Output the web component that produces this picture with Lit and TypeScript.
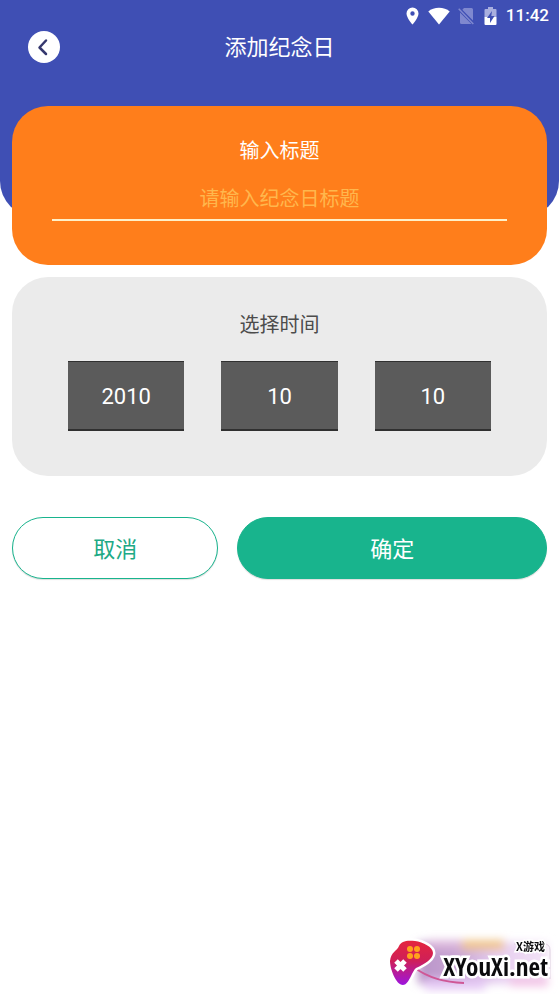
import { LitElement, html, css } from "lit";
import { customElement, state } from "lit/decorators.js";

@customElement("status-bar")
class StatusBar extends LitElement {
  static styles = css`
    :host {
      display: flex;
      align-items: center;
      justify-content: flex-end;
      height: 31px;
      padding-right: 10px;
      color: #fff;
      font: 500 17px/31px Roboto, sans-serif;
    }
    .pin { margin-right: 9px; }
    .wifi { margin-right: 8px; }
    .sim { margin-right: 10px; }
    .battery { margin-right: 9px; }
  `;

  render() {
    return html`
      <svg class="pin" width="13" height="18" viewBox="0 0 13 18" aria-hidden="true">
        <path fill="#fff" fill-rule="evenodd" d="M6.5 0.5A6 6 0 0 0 .5 6.5C.5 11 6.5 17.5 6.5 17.5S12.5 11 12.5 6.5A6 6 0 0 0 6.5.5ZM6.5 4.3a2.2 2.2 0 1 1 0 4.4a2.2 2.2 0 0 1 0-4.4Z" />
      </svg>
      <svg class="wifi" width="22" height="18" viewBox="0 0 22 18" aria-hidden="true">
        <path fill="#fff" d="M11 17.5L.3 4.4C3 2 7 .7 11 .7S19 2 21.7 4.4Z" />
      </svg>
      <svg class="sim" width="16" height="18" viewBox="0 0 16 18" aria-hidden="true">
        <path fill="#7f88cf" d="M6 1h7.5a1.5 1.5 0 0 1 1.5 1.5v11L4.3 2.7ZM2 5.5L13.5 17H3.5A1.5 1.5 0 0 1 2 15.5Z" />
        <path stroke="#7f88cf" stroke-width="1.5" d="M.7 1.7L15.3 17" />
      </svg>
      <svg class="battery" width="13" height="18" viewBox="0 0 13 18" aria-hidden="true">
        <path fill="#a9afdf" d="M4 0h5v2h2.5a1 1 0 0 1 1 1v7H.5V3a1 1 0 0 1 1-1H4Z" />
        <path fill="#fff" d="M.5 10h12v7a1 1 0 0 1-1 1h-10a1 1 0 0 1-1-1Z" />
        <path fill="#3f4fb4" d="M8 4L3 11h3v5l4.5-7H7.3Z" />
      </svg>
      <span>11:42</span>
    `;
  }
}

@customElement("site-badge")
class SiteBadge extends LitElement {
  static styles = css`
    :host {
      position: fixed;
      right: 0;
      bottom: 0;
      width: 179px;
      height: 69px;
      overflow: hidden;
      pointer-events: none;
    }
    .art { position: absolute; inset: 0; }
    .name, .tag {
      position: absolute;
      color: #0b0b0d;
      font-weight: 700;
      white-space: nowrap;
      paint-order: stroke fill;
    }
    .name {
      right: 11px;
      bottom: 15px;
      font-family: "Open Sans Condensed", "Noto Sans CJK SC", sans-serif;
      font-size: 25px;
      line-height: 26px;
      -webkit-text-stroke: 5px #fff;
    }
    .tag {
      right: 14px;
      top: 13px;
      font-family: "Noto Sans CJK SC", sans-serif;
      font-size: 11px;
      line-height: 16px;
      -webkit-text-stroke: 3px #fff;
    }
  `;

  render() {
    return html`
      <svg class="art" width="179" height="69" viewBox="0 0 179 69" aria-hidden="true">
        <defs>
          <linearGradient id="pad" x1="0" y1="0" x2="0" y2="1">
            <stop offset="0" stop-color="#e4263e" />
            <stop offset=".45" stop-color="#cf1f58" />
            <stop offset="1" stop-color="#9d16df" />
          </linearGradient>
          <linearGradient id="cloud" x1="0" y1="0" x2="1" y2="0">
            <stop offset="0" stop-color="#b994c9" />
            <stop offset=".3" stop-color="#c7a4d2" />
            <stop offset=".6" stop-color="#e5cdf0" />
            <stop offset="1" stop-color="#f4e4f6" />
          </linearGradient>
          <filter id="soft" x="-20%" y="-40%" width="140%" height="180%">
            <feGaussianBlur stdDeviation="4" />
          </filter>
        </defs>
        <g filter="url(#soft)">
          <rect x="38" y="17" width="130" height="42" fill="url(#cloud)" />
          <rect x="48" y="15" width="34" height="9" fill="#dcb7dc" />
          <rect x="82" y="15" width="42" height="10" fill="#efc48c" />
          <rect x="45" y="54" width="60" height="11" fill="#e5c9f5" />
          <rect x="130" y="53" width="38" height="8" fill="#f2bfe4" />
        </g>
        <path d="M134 19H164Q170 19 170 25V54" fill="none" stroke="#ddd0df" />
        <path d="M35 43Q54 57 84 58" fill="none" stroke="#cf5796" stroke-width="2" />
        <path d="M19 21C21 16 27 15 35 16C43 17 53 22 53 28C53 34 45 39 36 43C32 46 29 60 23 60C16 60 10 44 10 36C11 27 17 26 19 21Z" fill="url(#pad)" stroke="#fff" stroke-width="5" paint-order="stroke" stroke-linejoin="round" />
        <g fill="#ffa21c">
          <circle cx="30" cy="24" r="3" /><circle cx="37" cy="24" r="3" />
          <circle cx="30" cy="31" r="3" /><circle cx="37" cy="31" r="3" />
        </g>
        <path d="M16 36L25 45M25 36L16 45" stroke="#fff" stroke-width="5" />
      </svg>
      <span class="name">XYouXi.net</span>
      <span class="tag">X游戏</span>
    `;
  }
}

@customElement("app-root")
class AppRoot extends LitElement {
  static styles = css`
    :host {
      display: block;
      min-height: 100vh;
      background: #fff;
      font-family: Roboto, "Noto Sans CJK SC", sans-serif;
    }
    * { box-sizing: border-box; }
    h1, h2 { margin: 0; font-weight: 400; }
    button, input { font: inherit; margin: 0; }

    .hero {
      display: flow-root;
      padding: 0 12px;
      background: #3f4fb4;
      border-radius: 0 0 36px 36px;
    }
    .hero status-bar { margin: 0 -12px; }
    .bar {
      display: grid;
      grid-template-columns: 64px 1fr 64px;
      align-items: start;
      height: 75px;
    }
    .back {
      display: flex;
      width: 32px;
      height: 32px;
      margin-left: 16px;
      padding: 0;
      border: 0;
      border-radius: 50%;
      background: #fff;
    }
    .title {
      color: #fff;
      font-size: 22px;
      line-height: 34px;
      text-align: center;
    }
    .card {
      border-radius: 36px;
      font-size: 20px;
      line-height: 28px;
      text-align: center;
    }
    .entry {
      height: 159px;
      margin-bottom: -48px;
      padding: 31px 40px 0;
      background: #ff7e1b;
      color: #fff;
    }
    .entry label { display: block; }
    .entry input {
      display: block;
      width: 100%;
      height: 42px;
      margin-top: 14px;
      padding: 0;
      border: 0;
      border-bottom: 2px solid #fff0c8;
      border-radius: 0;
      outline: 0;
      background: none;
      color: #fff;
      text-align: center;
    }
    .entry input::placeholder { color: #ffb74d; opacity: 1; }

    .content { padding: 60px 12px 0; }
    .when {
      padding: 34px 56px 45px;
      background: #ebebeb;
      color: #4c4c4c;
    }
    .date {
      display: grid;
      grid-template-columns: repeat(3, 1fr);
      gap: 37px;
      margin-top: 22px;
    }
    .date input {
      width: 100%;
      height: 70px;
      padding: 2px 0 0;
      border: 0 solid #303030;
      border-width: 1px 0 2px;
      border-radius: 0;
      background: #5b5b5b;
      color: #fff;
      font-size: 22px;
      text-align: center;
    }
    .actions {
      display: grid;
      grid-template-columns: 2fr 3fr;
      gap: 19px;
      margin-top: 41px;
    }
    .actions button {
      height: 62px;
      padding: 0 0 2px;
      border: 1px solid #18b48d;
      border-radius: 31px;
      box-shadow: 0 1px 1px #0002;
      font-size: 22px;
    }
    .actions .cancel { background: #fff; color: #20a985; }
    .actions .confirm { background: #18b48d; color: #fff; }
  `;

  @state() private parts = [
    { label: "年", value: "2010" },
    { label: "月", value: "10" },
    { label: "日", value: "10" },
  ];

  render() {
    return html`
      <header class="hero">
        <status-bar></status-bar>
        <div class="bar">
          <button class="back" type="button" aria-label="返回">
            <svg width="32" height="32" viewBox="0 0 32 32" aria-hidden="true">
              <path d="M18 9.5L11.5 16.5L18 23" fill="none" stroke="#35386e" stroke-width="2.5" stroke-linecap="round" stroke-linejoin="round" />
            </svg>
          </button>
          <h1 class="title">添加纪念日</h1>
        </div>
        <section class="card entry">
          <label for="name">输入标题</label>
          <input id="name" type="text" placeholder="请输入纪念日标题" />
        </section>
      </header>
      <main class="content">
        <section class="card when" role="group" aria-labelledby="when">
          <h2 class="card" id="when">选择时间</h2>
          <div class="date">
            ${this.parts.map(
              (p) => html`<input type="text" inputmode="numeric" aria-label=${p.label} .value=${p.value} />`
            )}
          </div>
        </section>
        <div class="actions">
          <button class="cancel" type="button">取消</button>
          <button class="confirm" type="button">确定</button>
        </div>
      </main>
      <site-badge></site-badge>
    `;
  }
}
